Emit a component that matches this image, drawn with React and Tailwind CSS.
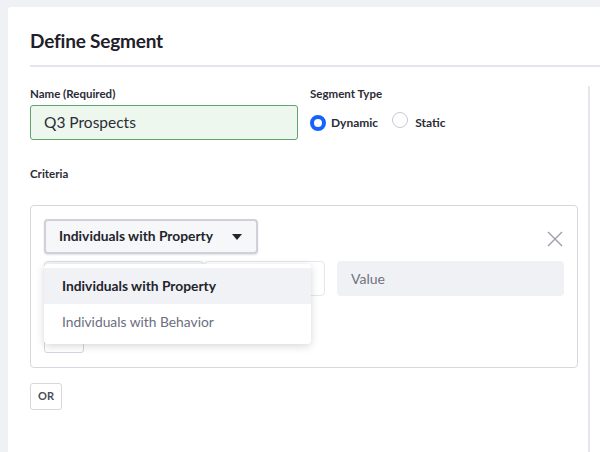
import React from "react";

function Radio({ checked }) {
  return checked ? (
    <span className="inline-block w-4 h-4 rounded-full border-[4px] border-[#1463ff] bg-white" />
  ) : (
    <span className="inline-block w-4 h-4 rounded-full border border-[#c9cad4] bg-white" />
  );
}

export default function App() {
  return (
    <div
      className="w-[600px] h-[452px] bg-[#f0f1f5] pl-2 pt-[7px] overflow-hidden"
      style={{ fontFamily: "Lato, 'Noto Sans', sans-serif" }}
    >
      <div className="bg-white rounded-tl-[3px] h-full pl-[22px] flex flex-col">
        <div className="h-[60px] pt-[22px] border-b-2 border-[#e4e5eb]">
          <h1 className="text-[19px] leading-[24px] font-bold text-[#1f2029] tracking-[-0.2px]">Define Segment</h1>
        </div>
        <div className="mt-[19px] flex-1 w-[560px] border-r-2 border-[#e6e7ec] pr-[10px]">
          <div className="flex gap-3">
            <div className="w-[268px]">
              <div className="text-[11.5px] leading-[14px] font-bold text-[#2b2c36] mt-[1px]">Name (Required)</div>
              <div className="mt-[4px] h-[35px] rounded-[3px] border border-[#5fa46d] bg-[#edf7ee] flex items-center pl-[13px] text-[15.5px] text-[#2b2c36]">
                Q3 Prospects
              </div>
            </div>
            <div>
              <div className="text-[11.5px] leading-[14px] font-bold text-[#2b2c36] mt-[1px]">Segment Type</div>
              <div className="mt-[11px] flex items-center text-[12px] font-bold text-[#2b2c36]">
                <Radio checked />
                <span className="ml-[5px]">Dynamic</span>
                <span className="ml-[14px]"><Radio /></span>
                <span className="ml-[7px]">Static</span>
              </div>
            </div>
          </div>
          <div className="mt-[27px] text-[11.5px] leading-[14px] font-bold text-[#2b2c36]">Criteria</div>
          <div className="mt-[24px] relative w-[548px] h-[163px] border border-[#d6d6de] rounded-[4px] px-[13px] pt-[13px]">
            <div className="flex items-start justify-between">
              <div className="w-[214px] h-[35px] rounded-[4px] border-2 border-[#cfd0da] bg-[#f6f7f9] shadow-[0_1px_2px_rgba(0,0,0,0.12)] flex items-center pl-[13px] pr-[14px] justify-between text-[13.8px] font-bold text-[#23242c]">
                <span>Individuals with Property</span>
                <svg width="10" height="6" viewBox="0 0 10 6"><path d="M0 0h10L5 6z" fill="#23242c" /></svg>
              </div>
              <svg className="mt-[12px] mr-[1px]" width="16" height="16" viewBox="0 0 16 16">
                <path d="M1 1L15 15M15 1L1 15" stroke="#9d9eab" strokeWidth="1.4" />
              </svg>
            </div>
            <div className="mt-[7px] flex gap-3">
              <div className="w-[160px] h-[35px] rounded-[4px] border border-[#dedfe6] bg-[#f6f7f9]" />
              <div className="w-[121px] h-[35px] -ml-[12px] rounded-[4px] border border-[#e6e7ec] bg-white" />
              <div className="flex-1 h-[35px] rounded-[4px] bg-[#f0f1f5] flex items-center pl-[14px] text-[14px] text-[#6f717e]">
                Value
              </div>
            </div>
            <div className="mt-[34px] w-[40px] h-[23px] rounded-[3px] border border-[#d6d6de]" />
            <div className="absolute left-[13px] top-[58px] w-[267px] rounded-[4px] bg-white shadow-[0_2px_8px_rgba(0,0,0,0.16)] py-[4px]">
              <div className="h-[36px] bg-[#f1f2f5] flex items-center pl-[18px] text-[13.8px] font-bold text-[#23242c]">
                Individuals with Property
              </div>
              <div className="h-[36px] flex items-center pl-[18px] text-[13.8px] text-[#6b6e80]">
                Individuals with Behavior
              </div>
            </div>
          </div>
          <div className="mt-[15px] w-[32px] h-[27px] rounded-[3px] border border-[#d6d6de] flex items-center justify-center text-[11px] font-bold text-[#4a4c58]">
            OR
          </div>
        </div>
      </div>
    </div>
  );
}
